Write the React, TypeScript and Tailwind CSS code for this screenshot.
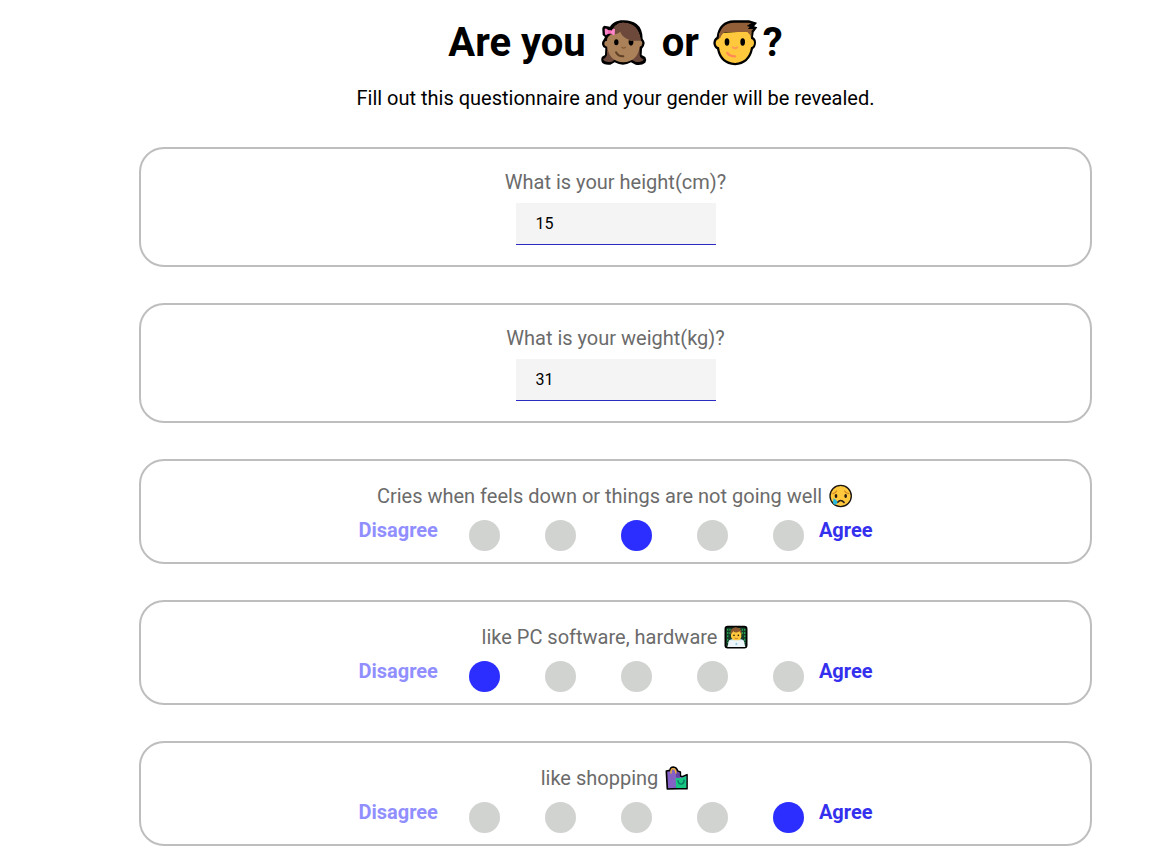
import { useState } from "react";
import type { ReactNode } from "react";

function GirlIcon() {
  return (
    <svg role="img" aria-label="girl" viewBox="20 24 168 144" className="inline-block h-12 w-14 align-middle">
      <path d="M101 28C82 28 69 36 62 47L45 44Q38 47 39 57L40 72L47 78L42 87Q37 92 38 100Q39 108 48 112L47 132L38 137Q33 146 39 156Q46 163 63 161L76 154Q101 168 125 154L139 161Q157 164 168 155Q173 146 168 138L157 132L158 113Q165 108 166 96Q165 88 160 84Q160 53 142 39Q124 27 101 28Z" fill="#000" />
      <path d="M54 80L53 133Q48 143 41 145Q47 156 68 152L78 144H123L138 152Q158 156 163 145Q153 143 151 132L151 78Z" fill="#6d493b" />
      <path d="M64 71Q75 35 101 35Q149 37 154 89Q159 89 159 97Q158 106 151 107Q145 151 102 154Q59 151 54 107Q44 105 45 96Q46 89 53 89Q54 75 64 71Z" fill="#aa8159" />
      <path d="M63 71Q74 34 102 35Q149 36 154 89Q134 91 119 86Q97 78 93 62Q82 72 63 71Z" fill="#6d493b" />
      <path d="M46 54Q50 49 57 58L66 59Q72 50 77 55L76 72Q70 74 64 66L56 68Q50 75 47 70Z" fill="#ff86c8" />
      <path d="M56 58H65V68H56Z" fill="#ff6abb" />
      <ellipse cx="81" cy="94" rx="6.5" ry="9" fill="#000" />
      <path d="M118 88Q124 90 132 89V97Q130 104 125 104Q119 103 118 97Z" fill="#000" />
      <path d="M98 109Q103 114 108 109" fill="none" stroke="#875b35" strokeWidth="4" strokeLinecap="round" />
      <path d="M80 124Q87 137 102 136" fill="none" stroke="#604126" strokeWidth="6" strokeLinecap="round" />
    </svg>
  );
}

function BoyIcon() {
  return (
    <svg role="img" aria-label="boy" viewBox="15 24 162 144" className="inline-block h-12 w-[54px] align-middle">
      <path d="M92 28H135L159 35L150 46L160 49L149 64L147 78Q156 83 156 95Q155 109 147 114Q137 160 93 163Q48 160 39 115Q29 109 28 96Q29 83 38 78C42 46 61 27 92 28Z" fill="#000" />
      <path d="M47 66L142 61L141 83Q150 86 150 96Q149 107 141 109Q134 153 93 156Q51 153 45 109Q35 106 35 96Q36 86 44 84Z" fill="#ffc83d" />
      <path d="M44 82Q48 36 91 35H133L142 37L129 45L139 47L132 53L148 54L142 60L141 82Q139 69 130 63H65Q54 66 48 82Z" fill="#925f38" />
      <path d="M142 37L129 45L139 47L132 53L148 54L159 49L147 47L158 36Z" fill="#000" />
      <ellipse cx="69" cy="93" rx="7" ry="11" fill="#000" />
      <ellipse cx="116" cy="93" rx="7" ry="11" fill="#000" />
      <path d="M86 109Q93 115 100 109" fill="none" stroke="#ff9b55" strokeWidth="6" strokeLinecap="round" />
      <path d="M70 126Q77 136 93 136" fill="none" stroke="#ff8a55" strokeWidth="7" strokeLinecap="round" />
    </svg>
  );
}

function CryingIcon() {
  return (
    <svg role="img" aria-label="crying face" viewBox="17 15 84 78" className="inline-block h-[26px] w-7 align-middle">
      <circle cx="61" cy="54" r="32" fill="#ffc83d" stroke="#1b1510" strokeWidth="4" />
      <path d="M38 47Q45 46 49 39M73 39Q77 46 85 47" fill="none" stroke="#d28a20" strokeWidth="4" strokeLinecap="round" />
      <ellipse cx="47" cy="54" rx="4" ry="6" fill="#2b1c12" />
      <ellipse cx="76" cy="54" rx="4" ry="6" fill="#2b1c12" />
      <path d="M52 73Q61 62 71 73" fill="none" stroke="#2b1c12" strokeWidth="5" strokeLinecap="round" />
      <path d="M40 61Q53 68 51 76Q46 84 39 77Q36 71 40 61Z" fill="#26b9dc" />
    </svg>
  );
}

function TechnologistIcon() {
  return (
    <svg role="img" aria-label="technologist" viewBox="13 15 84 78" className="inline-block h-[26px] w-7 align-middle">
      <rect x="26" y="23" width="64" height="63" rx="7" fill="#153a27" stroke="#000" strokeWidth="5" />
      <path d="M33 29V71M40 29V49M77 29V49M84 29V71" stroke="#25a04b" strokeWidth="4" strokeDasharray="6 4" />
      <path d="M35 82V69Q38 60 49 60H69Q80 60 83 69V82Z" fill="#b9d8e7" />
      <path d="M43 42Q44 28 59 28Q73 28 74 44V54Q70 66 59 66Q47 65 43 54Z" fill="#ffc83d" />
      <path d="M42 47Q39 27 57 25L65 27L72 27L70 31Q76 35 75 46L68 37Q57 44 50 37Z" fill="#8b572f" />
      <circle cx="52" cy="49" r="2.5" fill="#231509" />
      <circle cx="65" cy="49" r="2.5" fill="#231509" />
      <path d="M54 57Q59 61 64 57" fill="none" stroke="#a84f27" strokeWidth="2" />
      <path d="M38 64H80L86 84H32Z" fill="#edf5f8" />
      <path d="M59 71L63 75L59 79L55 75Z" fill="#8bc4df" />
    </svg>
  );
}

function ShoppingIcon() {
  return (
    <svg role="img" aria-label="shopping bags" viewBox="18 15 84 78" className="inline-block h-[26px] w-7 align-middle">
      <path d="M31 33L42 31Q43 21 52 21Q62 22 65 33L73 36V48L79 50L93 44V86H68L34 87Z" fill="#8661c5" stroke="#000" strokeWidth="5" strokeLinejoin="round" />
      <path d="M59 53L70 55L78 53L91 48V84H60Z" fill="#16c784" />
      <path d="M60 34L71 38V53H60Z" fill="#6541a5" />
      <path d="M45 39V33Q46 24 53 26Q59 28 60 39" fill="none" stroke="#f5b52b" strokeWidth="4" strokeLinecap="round" />
      <path d="M66 62Q68 74 77 72Q85 70 84 60" fill="none" stroke="#087b61" strokeWidth="4" strokeLinecap="round" />
    </svg>
  );
}

const cardClass = "rounded-[25px] border-2 border-[#bebebe]";

function NumberCard({ id, label, initial }: { id: string; label: string; initial: string }) {
  const [value, setValue] = useState(initial);
  return (
    <div className={`${cardClass} flex flex-col items-center pt-[18px] pb-5`}>
      <label htmlFor={id} className="text-xl leading-[30px] text-[#6b6b6b]">
        {label}
      </label>
      <input
        id={id}
        type="text"
        inputMode="numeric"
        value={value}
        onChange={(e) => setValue(e.target.value)}
        className="mt-1.5 h-[42px] w-[200px] border-b border-[#2c2cc4] bg-[#f4f4f4] px-5 text-base text-black outline-none"
      />
    </div>
  );
}

function ScaleCard({ name, label, icon, initial }: { name: string; label: string; icon: ReactNode; initial: number }) {
  const [selected, setSelected] = useState(initial);
  return (
    <fieldset className={`${cardClass} pt-5 pb-[11px]`} aria-labelledby={`${name}-label`}>
      <div id={`${name}-label`} className="flex items-center justify-center gap-1 text-xl leading-[30px] text-[#6b6b6b]">
        <span>{label}</span>
        {icon}
      </div>
      <div className="mt-[9px] flex items-start justify-center text-xl leading-5 font-bold">
        <span className="mr-[31px] text-[#918fff]">Disagree</span>
        <div className="mr-[15px] flex gap-[45px]">
          {[1, 2, 3, 4, 5].map((n) => (
            <input
              key={n}
              type="radio"
              name={name}
              value={n}
              aria-label={`${n} of 5`}
              checked={selected === n}
              onChange={() => setSelected(n)}
              className="size-[31px] cursor-pointer appearance-none rounded-full bg-[#d1d3d0] checked:bg-[#2b2eff]"
            />
          ))}
        </div>
        <span className="text-[#3430ee]">Agree</span>
      </div>
    </fieldset>
  );
}

export default function App() {
  return (
    <main className="bg-white pt-[13px] pr-[79px] pb-5 pl-[139px] font-['Roboto',sans-serif] text-black">
      <h1 className="flex items-center justify-center text-[40px] leading-[60px] font-bold whitespace-pre">
        <span>Are you </span>
        <GirlIcon />
        <span> or </span>
        <BoyIcon />
        <span>?</span>
      </h1>
      <p className="mt-2.5 text-center text-xl leading-[30px]">
        Fill out this questionnaire and your gender will be revealed.
      </p>
      <form className="mt-[34px] flex flex-col gap-9">
        <NumberCard id="height" label="What is your height(cm)?" initial="15" />
        <NumberCard id="weight" label="What is your weight(kg)?" initial="31" />
        <ScaleCard name="cries" label="Cries when feels down or things are not going well" icon={<CryingIcon />} initial={3} />
        <ScaleCard name="computers" label="like PC software, hardware" icon={<TechnologistIcon />} initial={1} />
        <ScaleCard name="shopping" label="like shopping" icon={<ShoppingIcon />} initial={5} />
      </form>
    </main>
  );
}
